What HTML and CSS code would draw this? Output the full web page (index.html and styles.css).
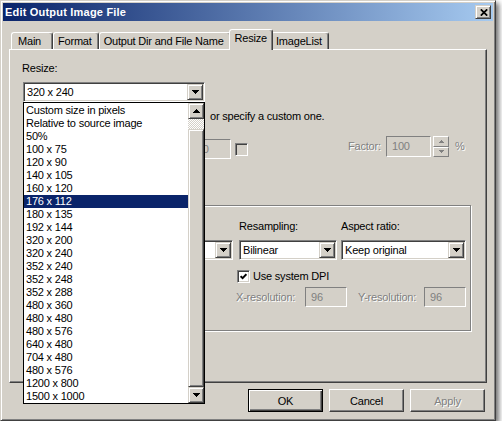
FILE: index.html
```html
<!DOCTYPE html>
<html lang="en">
<head>
  <meta charset="UTF-8" />
  <title>Edit Output Image File</title>
  <link rel="stylesheet" href="styles.css">
</head>
<body>

  <div class="window">
    <!-- Barra de título -->
    <div class="titlebar">
      <span class="title">Edit Output Image File</span>
      <span class="close-btn raised">
        <svg width="8" height="7" viewBox="0 0 8 7"><path d="M0.8 0.3 L7.2 6.7 M7.2 0.3 L0.8 6.7" stroke="#000" stroke-width="1.7"/></svg>
      </span>
    </div>

    <div class="client">
      <div class="tabs">
        <div class="tab">Main</div>
        <div class="tab">Format</div>
        <div class="tab">Output Dir and File Name</div>
        <div class="tab active">Resize</div>
        <div class="tab">ImageList</div>
      </div>

      <div class="panel">
        <div class="field-label">Resize:</div>

        <div class="combo-wrap">
          <div class="combo">
            <span class="combo-text">320 x 240</span>
            <span class="arrow-btn raised">
              <svg width="7" height="4" viewBox="0 0 7 4" shape-rendering="crispEdges"><path d="M0 0h7v1h-1v1h-1v1h-1v1h-1v-1h-1v-1h-1v-1h-1z"/></svg>
            </span>
          </div>

          <!-- lista aberta do combo -->
          <div class="droplist">
            <ul class="items">
              <li>Custom size in pixels</li>
              <li>Relative to source image</li>
              <li>50%</li>
              <li>100 x 75</li>
              <li>120 x 90</li>
              <li>140 x 105</li>
              <li>160 x 120</li>
              <li class="selected">176 x 112</li>
              <li>180 x 135</li>
              <li>192 x 144</li>
              <li>320 x 200</li>
              <li>320 x 240</li>
              <li>352 x 240</li>
              <li>352 x 248</li>
              <li>352 x 288</li>
              <li>480 x 360</li>
              <li>480 x 480</li>
              <li>480 x 576</li>
              <li>640 x 480</li>
              <li>704 x 480</li>
              <li>480 x 576</li>
              <li>1200 x 800</li>
              <li>1500 x 1000</li>
            </ul>
            <div class="scrollbar">
              <span class="sb-btn raised">
                <svg width="7" height="4" viewBox="0 0 7 4" shape-rendering="crispEdges"><path d="M3 0h1v1h1v1h1v1h1v1h-7v-1h1v-1h1v-1h1z"/></svg>
              </span>
              <span class="sb-track"></span>
              <span class="sb-thumb raised"></span>
              <span class="sb-btn raised">
                <svg width="7" height="4" viewBox="0 0 7 4" shape-rendering="crispEdges"><path d="M0 0h7v1h-1v1h-1v1h-1v1h-1v-1h-1v-1h-1v-1h-1z"/></svg>
              </span>
            </div>
          </div>
        </div>

        <p class="hint">or specify a custom one.</p>

        <div class="size-row">
          <div class="edit size-edit">240</div>
          <span class="check off"></span>
          <span class="dim factor-label">Factor:</span>
          <div class="edit factor-edit">100</div>
          <div class="spin">
            <span class="spin-half">
              <svg width="5" height="3" viewBox="0 0 5 3" shape-rendering="crispEdges"><path d="M2 0h1v1h1v1h1v1h-5v-1h1v-1h1z"/></svg>
            </span>
            <span class="spin-half">
              <svg width="5" height="3" viewBox="0 0 5 3" shape-rendering="crispEdges"><path d="M0 0h5v1h-1v1h-1v1h-1v-1h-1v-1h-1z"/></svg>
            </span>
          </div>
          <span class="dim percent">%</span>
        </div>

        <div class="group">
          <span></span>
          <span class="field-label">Resampling:</span>
          <span class="field-label">Aspect ratio:</span>

          <div class="combo c1">
            <span class="combo-text"></span>
            <span class="arrow-btn raised">
              <svg width="7" height="4" viewBox="0 0 7 4" shape-rendering="crispEdges"><path d="M0 0h7v1h-1v1h-1v1h-1v1h-1v-1h-1v-1h-1v-1h-1z"/></svg>
            </span>
          </div>
          <div class="combo">
            <span class="combo-text">Bilinear</span>
            <span class="arrow-btn raised">
              <svg width="7" height="4" viewBox="0 0 7 4" shape-rendering="crispEdges"><path d="M0 0h7v1h-1v1h-1v1h-1v1h-1v-1h-1v-1h-1v-1h-1z"/></svg>
            </span>
          </div>
          <div class="combo">
            <span class="combo-text">Keep original</span>
            <span class="arrow-btn raised">
              <svg width="7" height="4" viewBox="0 0 7 4" shape-rendering="crispEdges"><path d="M0 0h7v1h-1v1h-1v1h-1v1h-1v-1h-1v-1h-1v-1h-1z"/></svg>
            </span>
          </div>

          <label class="dpi-row">
            <span class="check on">
              <svg width="7" height="7" viewBox="0 0 7 7"><path d="M0.6 3.2 L2.6 5.2 L6.4 1.2" fill="none" stroke="#000" stroke-width="1.9"/></svg>
            </span>
            Use system DPI
          </label>

          <div class="res-row">
            <span class="dim res-label">X-resolution:</span>
            <div class="edit res-edit">96</div>
            <span class="dim res-label y">Y-resolution:</span>
            <div class="edit res-edit">96</div>
          </div>
        </div>
      </div>

      <div class="buttons">
        <button class="btn default">OK</button>
        <button class="btn">Cancel</button>
        <button class="btn disabled">Apply</button>
      </div>
    </div>
  </div>

</body>
</html>
```

FILE: styles.css
```css
/* Reset */
* { box-sizing: border-box; margin: 0; padding: 0; }

body {
  background: #fff;
  font-family: "Liberation Sans", Arial, sans-serif;
  font-size: 11px;
  letter-spacing: -0.2px;
  color: #000;
}

/* relevos estilo Windows clássico */
.raised {
  background: #d4d0c8;
  border: 1px solid;
  border-color: #d4d0c8 #404040 #404040 #d4d0c8;
  box-shadow: inset 1px 1px #fff, inset -1px -1px #808080;
}

.window {
  width: 496px;
  height: 421px;
  display: flex;
  flex-direction: column;
  padding: 2px;
  background: #d4d0c8;
  border: 1px solid;
  border-color: #d4d0c8 #404040 #404040 #d4d0c8;
  box-shadow: inset 1px 1px #fff, inset -1px -1px #808080, 3px 3px 5px rgba(0,0,0,0.55);
}

.titlebar {
  height: 18px;
  display: flex;
  align-items: center;
  padding: 0 2px;
  background: linear-gradient(to right, #0a246a, #a6caf0);
  color: #fff;
}
.title {
  flex: 1;
  font-weight: bold;
  letter-spacing: 0.2px;
  line-height: 18px;
}
.close-btn {
  width: 16px;
  height: 14px;
  display: flex;
  align-items: center;
  justify-content: center;
}
.close-btn svg { margin-left: 1px; }

.client {
  flex: 1;
  padding: 8px 6px 0;
}

/* Abas */
.tabs {
  display: flex;
  align-items: flex-end;
  height: 20px;
  margin-left: 2px;
}
.tab {
  height: 17px;
  min-width: 42px;
  padding: 0 6px 0 4px;
  line-height: 16px;
  white-space: nowrap;
  border: 1px solid;
  border-bottom: 0;
  border-color: #fff #404040 transparent #fff;
  border-radius: 3px 3px 0 0;
  box-shadow: inset -1px 0 #808080;
}
.tab:first-child { padding-left: 6px; }
.tab.active {
  position: relative;
  z-index: 1;
  height: 21px;
  margin: 0 -2px -1px;
  padding: 0 5px;
  background: #d4d0c8;
}

.panel {
  height: 334px;
  padding: 12px 15px 0 12px;
  border: 1px solid;
  border-color: #fff #404040 #404040 #fff;
  box-shadow: inset -1px -1px #808080;
}

.field-label { line-height: 13px; }

/* Combo */
.combo-wrap {
  position: relative;
  width: 182px;
  margin: 7px 0 0 1px;
}
.combo {
  height: 20px;
  display: flex;
  padding: 1px;
  background: #fff;
  border: 1px solid;
  border-color: #808080 #fff #fff #808080;
  box-shadow: inset 1px 1px #404040, inset -1px -1px #d4d0c8;
}
.combo-text {
  flex: 1;
  padding-left: 2px;
  line-height: 16px;
  white-space: nowrap;
  overflow: hidden;
}
.arrow-btn {
  width: 16px;
  height: 16px;
  display: flex;
  align-items: center;
  justify-content: center;
}

.droplist {
  position: absolute;
  top: 100%;
  left: 0;
  z-index: 5;
  width: 182px;
  height: 302px;
  display: flex;
  background: #fff;
  border: 1px solid #000;
}
.items {
  flex: 1;
  list-style: none;
  padding-top: 1px;
}
.items li {
  height: 13px;
  line-height: 13px;
  padding-left: 2px;
  white-space: nowrap;
}
.items li.selected {
  background: #0a246a;
  color: #fff;
}
.scrollbar {
  width: 16px;
  display: flex;
  flex-direction: column;
}
.sb-btn {
  height: 16px;
  display: flex;
  align-items: center;
  justify-content: center;
}
.sb-track {
  height: 10px;
  background: repeating-conic-gradient(#fff 0 25%, #d4d0c8 0 50%) 0 0 / 2px 2px;
}
.sb-thumb { flex: 1; }

.hint {
  margin: 8px 0 0 188px;
  line-height: 13px;
  white-space: nowrap;
}

/* Linha de tamanho personalizado */
.size-row {
  display: flex;
  align-items: flex-start;
  margin-top: 13px;
  padding-left: 163px;
}
.edit {
  height: 21px;
  padding-left: 5px;
  line-height: 19px;
  color: #808080;
  border: 1px solid;
  border-color: #808080 #fff #fff #808080;
}
.size-edit { width: 46px; height: 20px; margin-top: 3px; line-height: 18px; }
.factor-edit { width: 45px; }

.check {
  width: 13px;
  height: 13px;
  display: flex;
  align-items: center;
  justify-content: center;
  border: 1px solid;
  border-color: #808080 #fff #fff #808080;
  box-shadow: inset 1px 1px #404040, inset -1px -1px #d4d0c8;
}
.check.off { margin: 7px 0 0 4px; background: #d4d0c8; }
.check.on { background: #fff; }

.dim {
  color: #808080;
  text-shadow: 1px 1px #fff;
}
.factor-label {
  width: 38px;
  margin-left: 100px;
  line-height: 21px;
}
.spin {
  width: 16px;
  height: 21px;
  margin-left: 2px;
  display: flex;
  flex-direction: column;
}
.spin-half {
  flex: 1;
  display: flex;
  align-items: center;
  justify-content: center;
  border: 1px solid;
  border-color: #fff #808080 #808080 #fff;
}
.spin-half svg { fill: #808080; }
.percent {
  margin-left: 6px;
  line-height: 21px;
}

/* Grupo */
.group {
  height: 126px;
  margin: 46px 0 0 2px;
  padding: 14px 4px 0 0;
  display: grid;
  grid-template-columns: 98px 98px 125px;
  grid-template-rows: 13px 20px 13px 20px;
  column-gap: 4px;
  row-gap: 7px;
  justify-content: end;
  border: 1px solid #808080;
  box-shadow: inset 1px 1px #fff, 1px 1px #fff;
}
.group .combo.c1 { margin-right: 2px; }

.dpi-row {
  grid-column: 2 / 4;
  margin: 5px 0 0 -2px;
  display: flex;
  align-items: center;
  gap: 3px;
  line-height: 13px;
}
.res-row {
  grid-column: 2 / 4;
  margin: 0 0 0 -3px;
  display: flex;
  align-items: center;
}
.res-label { width: 69px; }
.res-label.y { width: 66px; margin-left: 11px; }
.res-edit { width: 42px; height: 20px; line-height: 18px; }

/* Botões */
.buttons {
  display: flex;
  justify-content: flex-end;
  gap: 6px;
  margin-top: 6px;
  padding-right: 2px;
}
.btn {
  width: 75px;
  height: 23px;
  font: inherit;
  letter-spacing: inherit;
  color: #000;
  background: #d4d0c8;
  border: 1px solid;
  border-color: #fff #404040 #404040 #fff;
  box-shadow: inset -1px -1px #808080;
}
.btn.default {
  border: 1px solid #000;
  box-shadow: inset 1px 1px #fff, inset -1px -1px #404040, inset -2px -2px #808080;
}
.btn.disabled {
  color: #808080;
  text-shadow: 1px 1px #fff;
}
```
